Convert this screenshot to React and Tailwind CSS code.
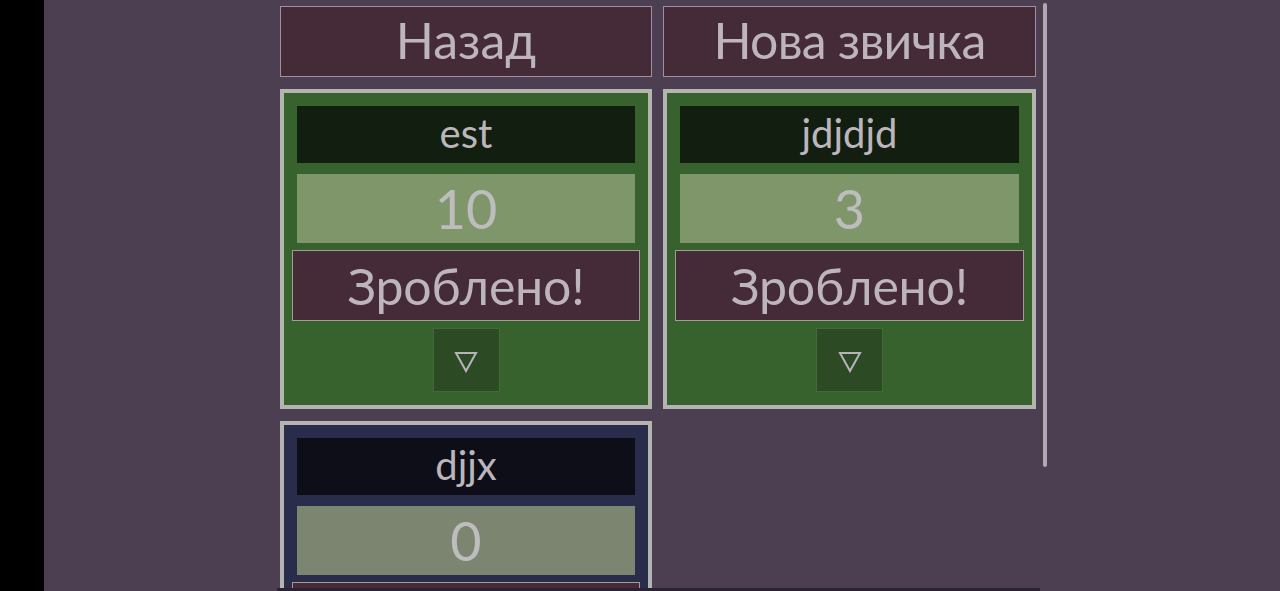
import React from "react";

const font = { fontFamily: "Lato, 'Open Sans', sans-serif" };

function Arrow() {
  return (
    <svg width="24" height="22" viewBox="0 0 24 22">
      <polygon points="2,2 22,2 12,20" fill="none" stroke="#b9b3b9" strokeWidth="2" strokeLinejoin="miter" />
    </svg>
  );
}

function Card({ name, count, blue }) {
  const outer = blue ? "bg-[#2a2c4b]" : "bg-[#37622e]";
  const nameBg = blue ? "bg-[#0e0e18]" : "bg-[#111e10]";
  const countBg = blue ? "bg-[#7b8570]" : "bg-[#7f966a]";
  return (
    <div className={`border-[4px] border-[#b4b5b0] ${outer} p-[13px] flex flex-col`}>
      <div className={`${nameBg} h-[57px] flex items-center justify-center text-[40px] leading-none text-[#bcb6bc] pb-[4px]`}>
        {name}
      </div>
      <div className={`${countBg} h-[69px] mt-[11px] flex items-center justify-center text-[54px] leading-none text-[#bdbdbd]`}>
        {count}
      </div>
      <div className="mx-[-5px] mt-[7px] h-[71px] bg-[#452a37] border border-[#a09c98] flex items-center justify-center text-[50px] tracking-[-0.2px] leading-none text-[#bdb5bd]">
        Зроблено!
      </div>
      <div className="mt-[7px] flex justify-center">
        <div className="w-[67px] h-[64px] bg-[#2c4b25] border border-[#3f6b36] flex items-center justify-center pt-[4px]">
          <Arrow />
        </div>
      </div>
    </div>
  );
}

export default function App() {
  return (
    <div className="w-[1280px] h-[591px] flex overflow-hidden" style={font}>
      <div className="w-[44px] h-full bg-black shrink-0" />
      <div className="relative flex-1 h-full bg-[#4b3f51] overflow-hidden">
        <div className="pl-[236px] pt-[6px]">
          <div className="grid grid-cols-[372px_373px] gap-x-[11px] gap-y-[12px]">
            <div className="h-[71px] bg-[#452a37] border border-[#a08fa0] flex items-center justify-center text-[50px] leading-none text-[#bdb5bd] pb-[4px]">
              Назад
            </div>
            <div className="h-[71px] bg-[#452a37] border border-[#a08fa0] flex items-center justify-center text-[50px] tracking-[-0.8px] leading-none text-[#bdb5bd] pb-[4px]">
              Нова звичка
            </div>
            <Card name="est" count="10" />
            <Card name="jdjdjd" count="3" />
            <Card name="djjx" count="0" blue />
          </div>
        </div>
        <div className="absolute left-[999px] top-[3px] w-[4px] h-[464px] bg-[#b0a9b0] rounded-sm" />
        <div className="absolute left-[233px] bottom-0 w-[763px] h-[3px] bg-[#2b2233]" />
      </div>
    </div>
  );
}
